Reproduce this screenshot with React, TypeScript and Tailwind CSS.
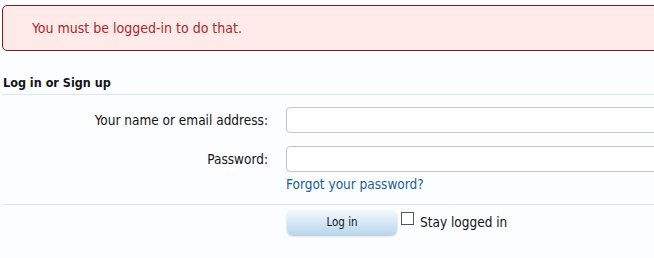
import React from 'react';

const font = { fontFamily: '"DejaVu Sans Condensed", "DejaVu Sans", sans-serif' };

export default function App() {
  return (
    <div className="w-[654px] h-[258px] overflow-hidden bg-[#fcfdfe] text-[#141414]" style={font}>
      <div className="mt-[5px] ml-[2px] mr-[-20px] h-[46px] flex items-center pl-[29px] bg-[#ffeaea] border border-[#7e1b1b] rounded-[5px] text-[14px] text-[#a52a2a]">
        You must be logged-in to do that.
      </div>

      <h2 className="mt-[24px] ml-[3px] text-[12.5px] font-bold leading-[16px]">Log in or Sign up</h2>
      <div className="mt-[3px] ml-[2px] h-px bg-[#d9e8ee]" />

      <div className="mt-[12px] flex items-center">
        <label className="w-[268px] shrink-0 text-right text-[13.5px]">Your name or email address:</label>
        <input type="text" className="ml-[18px] w-[400px] shrink-0 h-[26px] bg-white border border-[#c6c6c6] rounded-[4px]" />
      </div>
      <div className="mt-[13px] flex items-center">
        <label className="w-[268px] shrink-0 text-right text-[13.5px]">Password:</label>
        <input type="password" className="ml-[18px] w-[400px] shrink-0 h-[26px] bg-white border border-[#c6c6c6] rounded-[4px]" />
      </div>
      <div className="ml-[286px] mt-[4px] text-[13.5px] leading-[16px] text-[#176093]">Forgot your password?</div>

      <div className="mt-[12px] ml-[2px] h-px bg-[#d9e8ee]" />

      <div className="mt-[5px] ml-[287px] flex items-start">
        <button className="w-[110px] h-[25px] shrink-0 rounded-[6px] text-[11.5px] text-[#141414] bg-gradient-to-b from-[#f4f9fd] to-[#b8d6ee] shadow-[0_1px_2px_rgba(0,0,0,0.25)]">
          Log in
        </button>
        <label className="ml-[4px] mt-[2px] flex items-start text-[13.5px] leading-[14px]">
          <span className="w-[13px] h-[13px] border border-[#555] bg-white" />
          <span className="ml-[6px] mt-[3px]">Stay logged in</span>
        </label>
      </div>
    </div>
  );
}
